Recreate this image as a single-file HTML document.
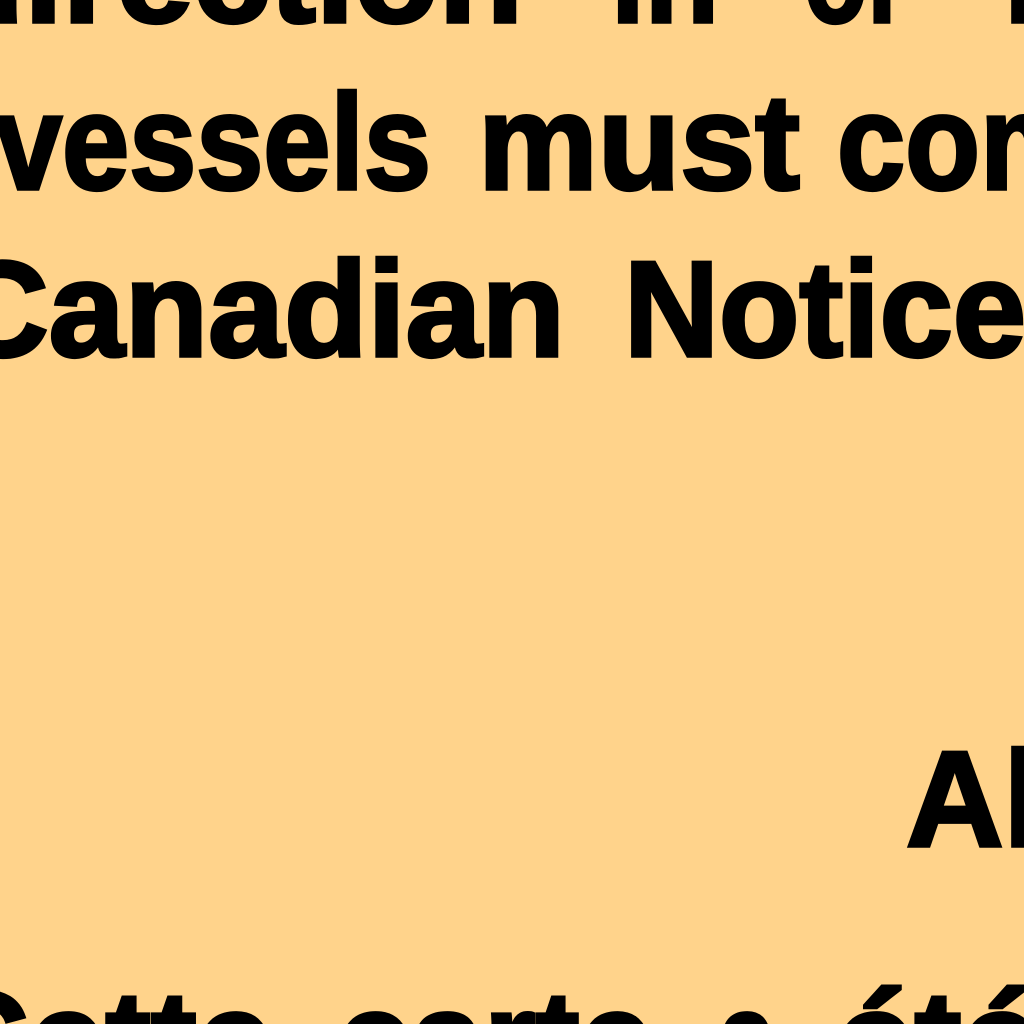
<!DOCTYPE html>
<html><head><meta charset="utf-8"><style>
html,body{margin:0;padding:0;background:#FFD38B;width:1024px;height:1024px;overflow:hidden}
svg{display:block}
text{font-family:"Liberation Sans",Arial,sans-serif;font-weight:bold;font-size:136px;fill:#000;stroke:#000;stroke-width:3.5px}
</style></head><body>
<svg width="1024" height="1024" viewBox="0 0 1024 1024" xmlns="http://www.w3.org/2000/svg">
<rect width="1024" height="1024" fill="#FFD38B" stroke="none"/>
<text x="-60" y="22" textLength="583" lengthAdjust="spacingAndGlyphs">direction</text>
<text x="611" y="22" textLength="108" lengthAdjust="spacingAndGlyphs">in</text>
<text x="804" y="22" textLength="104" lengthAdjust="spacingAndGlyphs">or</text>
<text x="1003" y="22" textLength="40" lengthAdjust="spacingAndGlyphs">i</text>
<text x="-5" y="189" textLength="436" lengthAdjust="spacingAndGlyphs">vessels</text>
<text x="478" y="189" textLength="322" lengthAdjust="spacingAndGlyphs">must</text>
<text x="837" y="189" textLength="252" lengthAdjust="spacingAndGlyphs">com</text>
<text x="-50" y="356" textLength="615" lengthAdjust="spacingAndGlyphs">Canadian</text>
<text x="624" y="356" textLength="402" lengthAdjust="spacingAndGlyphs">Notice</text>
<text x="906" y="846" textLength="135" lengthAdjust="spacingAndGlyphs">Al</text>
<text x="-70" y="1086" textLength="343" lengthAdjust="spacingAndGlyphs">Cette</text>
<text x="337" y="1086" textLength="316" lengthAdjust="spacingAndGlyphs">carte</text>
<text x="718" y="1086" textLength="58" lengthAdjust="spacingAndGlyphs">a</text>
<text x="836" y="1086" textLength="204" lengthAdjust="spacingAndGlyphs">été</text>
</svg>
</body></html>
